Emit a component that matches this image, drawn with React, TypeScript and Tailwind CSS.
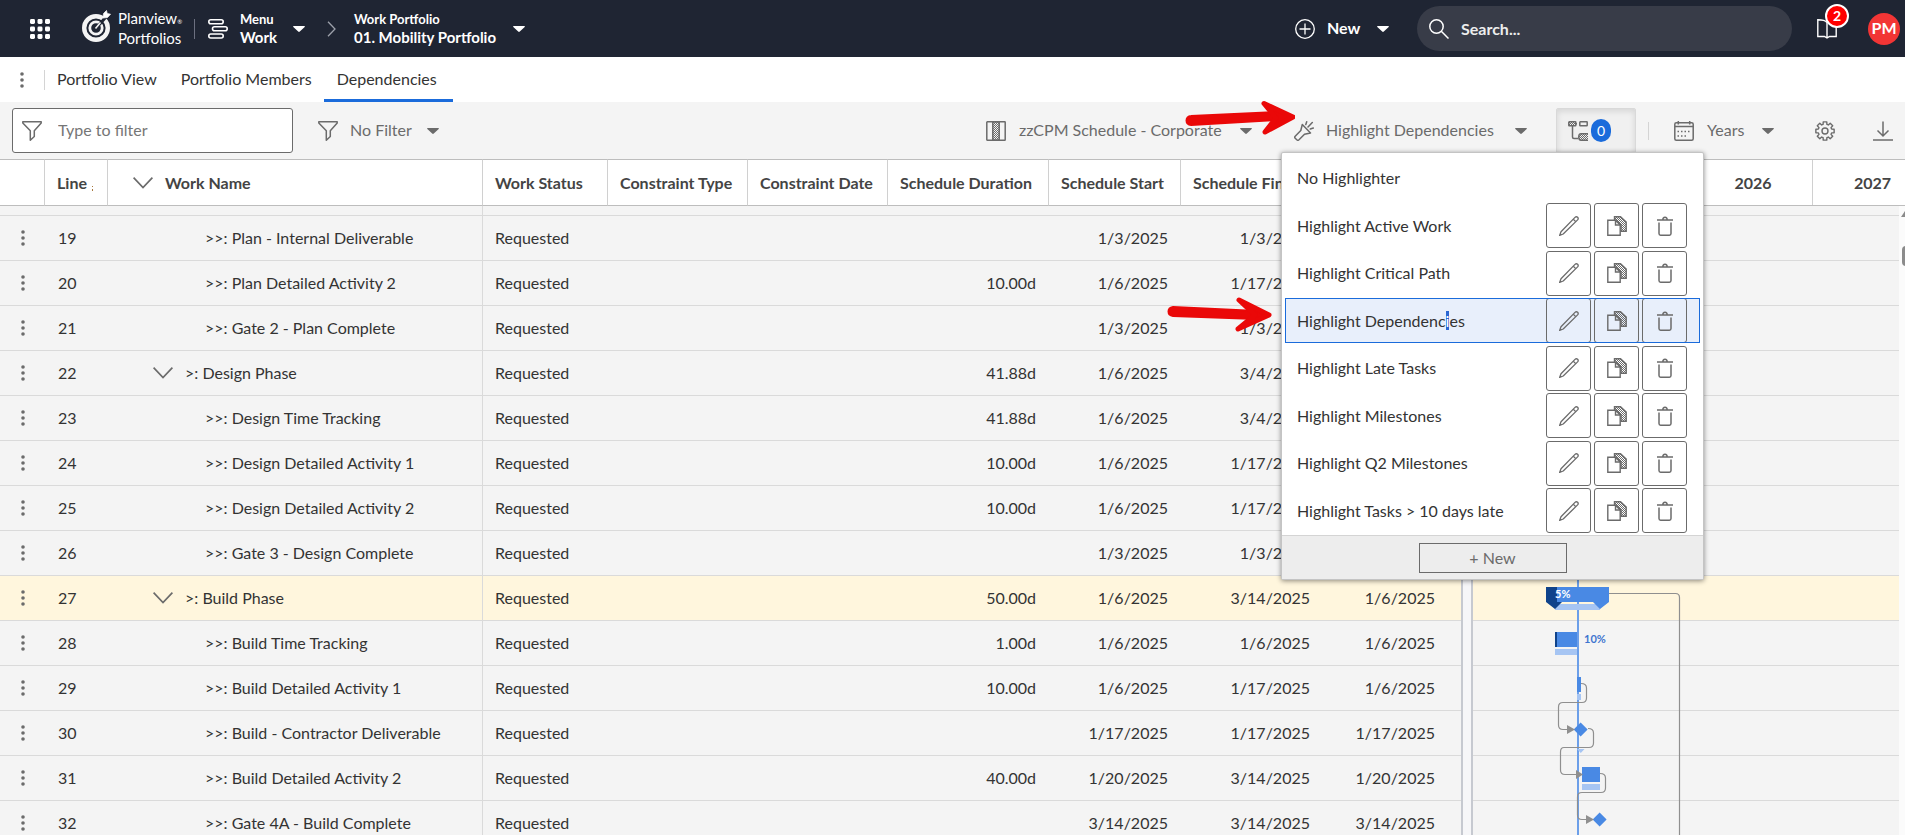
import { useState } from 'react';

interface WorkRow {
  line: number;
  name: string;
  phase?: boolean;
  duration?: string;
  start: string;
  finish: string;
  actual?: string;
  selected?: boolean;
}

const rows: WorkRow[] = [
  { line: 19, name: '>>: Plan - Internal Deliverable', start: '1/3/2025', finish: '1/3/2025' },
  { line: 20, name: '>>: Plan Detailed Activity 2', duration: '10.00d', start: '1/6/2025', finish: '1/17/2025' },
  { line: 21, name: '>>: Gate 2 - Plan Complete', start: '1/3/2025', finish: '1/3/2025' },
  { line: 22, name: '>: Design Phase', phase: true, duration: '41.88d', start: '1/6/2025', finish: '3/4/2025' },
  { line: 23, name: '>>: Design Time Tracking', duration: '41.88d', start: '1/6/2025', finish: '3/4/2025' },
  { line: 24, name: '>>: Design Detailed Activity 1', duration: '10.00d', start: '1/6/2025', finish: '1/17/2025' },
  { line: 25, name: '>>: Design Detailed Activity 2', duration: '10.00d', start: '1/6/2025', finish: '1/17/2025' },
  { line: 26, name: '>>: Gate 3 - Design Complete', start: '1/3/2025', finish: '1/3/2025' },
  { line: 27, name: '>: Build Phase', phase: true, duration: '50.00d', start: '1/6/2025', finish: '3/14/2025', actual: '1/6/2025', selected: true },
  { line: 28, name: '>>: Build Time Tracking', duration: '1.00d', start: '1/6/2025', finish: '1/6/2025', actual: '1/6/2025' },
  { line: 29, name: '>>: Build Detailed Activity 1', duration: '10.00d', start: '1/6/2025', finish: '1/17/2025', actual: '1/6/2025' },
  { line: 30, name: '>>: Build - Contractor Deliverable', start: '1/17/2025', finish: '1/17/2025', actual: '1/17/2025' },
  { line: 31, name: '>>: Build Detailed Activity 2', duration: '40.00d', start: '1/20/2025', finish: '3/14/2025', actual: '1/20/2025' },
  { line: 32, name: '>>: Gate 4A - Build Complete', start: '3/14/2025', finish: '3/14/2025', actual: '3/14/2025' },
];

const highlighters = [
  'Highlight Active Work',
  'Highlight Critical Path',
  'Highlight Dependencies',
  'Highlight Late Tasks',
  'Highlight Milestones',
  'Highlight Q2 Milestones',
  'Highlight Tasks > 10 days late',
];

// eight teeth around a 20x20 box
const gearPath = Array.from({ length: 8 }, (_, i) => i * 45)
  .flatMap((a) => [[a - 16, 6.9], [a - 11, 9.3], [a + 11, 9.3], [a + 16, 6.9]])
  .map(([deg, r], i) => {
    const rad = (deg * Math.PI) / 180;
    return `${i ? 'L' : 'M'}${(10 + r * Math.sin(rad)).toFixed(2)} ${(10 - r * Math.cos(rad)).toFixed(2)}`;
  })
  .join('') + 'Z';

function Caret({ className = '' }: { className?: string }) {
  return (
    <svg className={`w-3 h-[6px] shrink-0 ${className}`} viewBox="0 0 12 6" fill="currentColor">
      <path d="M0.8 0h10.4c.7 0 1 .6.5 1.100L6.800 5.600c-.5.5-1.100.5-1.600 0L.3 1.100C-.2.6.1 0 .8 0z" />
    </svg>
  );
}

function Dots() {
  return (
    <svg className="w-1 h-4 block" viewBox="0 0 4 16" fill="#6b6b6b">
      <circle cx="2" cy="2" r="1.8" />
      <circle cx="2" cy="8" r="1.8" />
      <circle cx="2" cy="14" r="1.8" />
    </svg>
  );
}

function ChevronDown() {
  return (
    <svg className="w-5 h-3 shrink-0" viewBox="0 0 20 12" fill="none" stroke="#6b6b6b" strokeWidth="1.7">
      <path d="M0.6 0.6L10 10.5L19.4 0.6" />
    </svg>
  );
}

function FunnelIcon() {
  return (
    <svg className="w-5 h-5 shrink-0" viewBox="0 0 20 20" fill="none" stroke="#6b6b6b" strokeWidth="1.5" strokeLinejoin="round">
      <path d="M0.8 0.8H19.2V2L12.3 9.8V15.5L8.3 19.2V9.8L0.8 2Z" />
    </svg>
  );
}

function PencilIcon() {
  return (
    <svg className="w-5 h-5" viewBox="0 0 20 20" fill="none" stroke="#6b6b6b" strokeWidth="1.3" strokeLinejoin="round">
      <path d="M0.6 19.4L2 15.8L16 1.4C16.7.7 17.9.6 18.6 1.3C19.300 2 19.300 3.100 18.600 3.900L4.200 18Z" />
      <path d="M14.300 3.200L16.700 5.600" />
    </svg>
  );
}

function CopyIcon() {
  return (
    <svg className="w-5 h-5" viewBox="0 0 20 20" stroke="#6b6b6b" strokeWidth="1.4">
      <path d="M7.500 4V.8H13.500L19.200 6V15.200H14V9L8 4Z" fill="url(#dither)" />
      <path d="M.8 4.300H8.500L13.200 9V19.300H.8Z" fill="none" />
      <path d="M8.500 4.300V9H13.200" fill="none" />
    </svg>
  );
}

function TrashIcon() {
  return (
    <svg className="w-5 h-5" viewBox="0 0 20 20" fill="none" stroke="#6b6b6b" strokeWidth="1.5">
      <path d="M2 4H18M7.8 4C7.8 .2 12.2 .2 12.2 4M4 6.5V17.5C4 18.6 4.6 19.2 5.6 19.2H14.4C15.4 19.2 16 18.6 16 17.5V6.5" />
    </svg>
  );
}

function ArrowMark({ className, d, shaft }: { className: string; d: string; shaft: string }) {
  return (
    <svg className={`absolute z-30 pointer-events-none w-[110px] h-9 ${className}`} viewBox="0 0 110 36" fill="#ea0808" stroke="#ea0808" strokeLinejoin="round" strokeLinecap="round">
      <path d={shaft} strokeWidth="2" />
      <path d={d} strokeWidth="5" />
    </svg>
  );
}

function TopBar() {
  return (
    <header className="h-[57px] shrink-0 bg-[#1f2533] text-white flex items-center pl-[30px] pr-[5px]">
      <button aria-label="Applications">
        <svg className="w-5 h-5" viewBox="0 0 20 20" fill="#fff">
          {[0, 7.5, 15].map((y) => [0, 7.5, 15].map((x) => <rect key={`${x}-${y}`} x={x} y={y} width="5" height="5" rx="1.4" />))}
        </svg>
      </button>
      <a href="#" className="flex items-center ml-8 w-[112px]">
        <svg className="w-[30px] h-[38px] shrink-0" viewBox="0 0 30 38" fill="none" stroke="#f4f4f4">
          <circle cx="14" cy="18" r="11.8" strokeWidth="4.4" />
          <circle cx="14" cy="18" r="6.2" strokeWidth="2.8" />
          <path d="M16 16L24 7" stroke="#1f2533" strokeWidth="3" />
          <path d="M13.500 18.500L18.500 12.500" strokeWidth="1.6" />
          <path d="M21 8L21.500 3.500L24.500 .5L25.200 3.500L28.500 4.200L25.500 7.500Z" fill="#fff" strokeWidth=".8" />
        </svg>
        <span className="ml-[6px] pb-[2px] text-[15px] leading-4 whitespace-nowrap">
          Planview<span className="text-[6px]">®</span>
          <br />
          Portfolios
        </span>
      </a>
      <span className="w-px h-5 bg-[#6c7080]" />
      <button className="flex items-center ml-[13px] text-left font-bold">
        <svg className="w-5 h-5" viewBox="0 0 20 20" fill="none" stroke="#fff" strokeWidth="1.600">
          <rect x=".8" y=".8" width="14.4" height="4" rx="2" />
          <rect x="4.500" y="7.800" width="14.700" height="4" rx="2" />
          <rect x=".8" y="15" width="14.4" height="4" rx="2" />
        </svg>
        <span className="ml-3 w-[53px] pb-[2px]">
          <span className="block text-[13px] leading-[18px]">Menu</span>
          <span className="block text-[15px] leading-[18px]">Work</span>
        </span>
        <Caret />
      </button>
      <svg className="w-[9px] h-4 ml-[22px]" viewBox="0 0 9 16" fill="none" stroke="#9da1ab" strokeWidth="1.3">
        <path d="M1 .7L8 8L1 15.3" />
      </svg>
      <button className="flex items-center ml-[18px] text-left font-bold">
        <span className="w-[159px] pb-[2px]">
          <span className="block text-[13px] leading-[18px]">Work Portfolio</span>
          <span className="block text-[15px] leading-[18px]">01. Mobility Portfolio</span>
        </span>
        <Caret />
      </button>

      <button className="flex items-center ml-auto font-bold">
        <svg className="w-5 h-5" viewBox="0 0 20 20" fill="none" stroke="#fff" strokeWidth="1.3">
          <circle cx="10" cy="10" r="9.3" />
          <path d="M10 4.500V15.500M4.500 10H15.500" />
        </svg>
        <span className="ml-3 w-[50px] text-left pb-px">New</span>
        <Caret />
      </button>
      <label className="flex items-center ml-7 w-[375px] h-[45px] rounded-full bg-[#383c48] pl-3">
        <svg className="w-5 h-5 shrink-0" viewBox="0 0 20 20" fill="none" stroke="#fff" strokeWidth="1.5">
          <circle cx="7.500" cy="7.500" r="6.700" />
          <path d="M12.300 12.300L19.500 19.500" />
        </svg>
        <input aria-label="Search" placeholder="Search..." className="ml-3 w-72 bg-transparent outline-none font-bold placeholder:text-[#eceded]" />
      </label>
      <button aria-label="Notifications" className="relative ml-[25px] w-5 h-5">
        <svg className="w-5 h-5" viewBox="0 0 20 20" fill="none" stroke="#fff" strokeWidth="1.4">
          <path d="M10 3.500V19M10 3.500C8 1 4 .8.8.8V17.500H7.500L10 19L12.500 17.500H19.200V.8C16 .8 12 1 10 3.500Z" />
        </svg>
        <span className="absolute left-2 -top-[15px] w-6 h-6 rounded-full bg-[#f00] border-2 border-white text-sm leading-5 font-bold text-center">2</span>
      </button>
      <button className="ml-[31px] w-8 h-8 rounded-full bg-[#f23535] font-bold text-base text-center pb-px">PM</button>
    </header>
  );
}

function Tabs() {
  return (
    <nav className="h-[45px] shrink-0 flex items-stretch bg-white text-[#333]">
      <button aria-label="Tab options" className="w-11 flex items-center justify-center">
        <Dots />
      </button>
      <span className="w-px h-5 bg-[#d4d4d4] self-center" />
      <a href="#" className="flex items-center px-3 pb-[2px]">Portfolio View</a>
      <a href="#" className="flex items-center px-3 pb-[2px]">Portfolio Members</a>
      <a href="#" className="flex items-center pl-[13px] pr-4 pt-px border-b-[3px] border-[#1a6bdb]">Dependencies</a>
    </nav>
  );
}

function HighlightMenu() {
  const [selected, setSelected] = useState('Highlight Dependencies');

  return (
    <div className="absolute z-20 left-[-13px] top-[32px] w-[423px] bg-white border border-[#c4c4c4] rounded-[2px] shadow-[0_1px_5px_rgba(0,0,0,0.45)] text-[#333]">
      <ul className="h-[382px] pt-[2px] flex flex-col">
        <li className="flex-1 flex items-center pl-[15px]">
          <button onClick={() => setSelected('')}>No Highlighter</button>
        </li>
        {highlighters.map((name) => (
          <li key={name} className="flex-1 flex items-center px-[3px]">
            <div className={`flex-1 flex items-center h-[45px] ${name === selected ? 'bg-[#e8effb] outline outline-1 -outline-offset-1 outline-[#1a6bdb]' : ''}`}>
              <button className="flex-1 text-left pl-3" onClick={() => setSelected(name)}>
                {name === selected && name.endsWith('ies') ? (
                  <>
                    {name.slice(0, -3)}
                    <span className="bg-[#2a66d2] text-white">i</span>es
                  </>
                ) : (
                  name
                )}
              </button>
              <div className="flex gap-[3px] mr-[13px]">
                <button aria-label={`Edit ${name}`} className="w-[45px] h-[45px] border border-[#6b6b6b] rounded-[3px] flex items-center justify-center"><PencilIcon /></button>
                <button aria-label={`Copy ${name}`} className="w-[45px] h-[45px] border border-[#6b6b6b] rounded-[3px] flex items-center justify-center"><CopyIcon /></button>
                <button aria-label={`Delete ${name}`} className="w-[45px] h-[45px] border border-[#6b6b6b] rounded-[3px] flex items-center justify-center"><TrashIcon /></button>
              </div>
            </div>
          </li>
        ))}
      </ul>
      <div className="h-11 pt-px bg-[#ededed] border-t border-[#d4d4d4] flex items-center justify-center">
        <button className="w-[148px] h-[30px] border border-[#6b6b6b] text-[#6b6b6b]">+ New</button>
      </div>
    </div>
  );
}

function Toolbar() {
  return (
    <div className="h-[57px] shrink-0 flex items-center bg-[#f4f4f4] pl-3 pr-3 text-[#6b6b6b]">
      <label className="flex items-center w-[281px] h-[45px] bg-white border border-[#6b6b6b] rounded-[3px] pl-[9px]">
        <FunnelIcon />
        <input aria-label="Type to filter" placeholder="Type to filter" className="ml-4 pb-[2px] w-52 outline-none placeholder:text-[#767676]" />
      </label>
      <button className="flex items-center ml-[25px]">
        <FunnelIcon />
        <span className="ml-3 w-[77px] pb-[2px] text-left">No Filter</span>
        <Caret />
      </button>

      <button className="flex items-center ml-auto">
        <svg className="w-5 h-5" viewBox="0 0 20 20" stroke="#6b6b6b" strokeWidth="1.5">
          <rect x="6.800" y=".8" width="6.400" height="18.400" fill="url(#dither)" />
          <rect x=".8" y=".8" width="18.400" height="18.400" rx=".5" fill="none" />
        </svg>
        <span className="ml-[13px] w-[221px] pb-[2px] text-left">zzCPM Schedule - Corporate</span>
        <Caret />
      </button>
      <div className="relative ml-[42px]">
        <button className="flex items-center">
          <svg className="w-5 h-5" viewBox="0 0 20 20" fill="none" stroke="#6b6b6b" strokeWidth="1.5" strokeLinejoin="round">
            <path d="M1.200 15.300L6.800 9.500L8.300 3.500L16.500 12L10.500 13.300L5 18.800C4.300 19.400 3.500 19.400 2.800 18.800L1.200 17.200C.6 16.600.6 15.900 1.200 15.300Z" />
            <path d="M11.800 3.500L12.700 .8M14 6L18.300 1.500M16.300 8L19.300 7" strokeLinecap="round" />
          </svg>
          <span className="ml-3 w-[189px] pb-[2px] text-left">Highlight Dependencies</span>
          <Caret />
        </button>
        <ArrowMark className="left-[-109px] -top-5" shaft="M6 16L92 12V20L6 25C0 25 0 16 6 16Z" d="M79 3.500L108 17L80 32L91 18Z" />
        <ArrowMark className="left-[-129px] top-[177px]" shaft="M8 10L92 14V22L8 19C2 18 2 11 8 10Z" d="M74 3L104 18L73 32L90 18Z" />
        <HighlightMenu />
      </div>
      <button aria-label="Dependency view" className="flex items-center ml-[29px] w-20 h-[45px] pl-[11px] border border-[#d9d9d9] bg-[#f0f0f0] rounded-[2px] shadow-[inset_0_2px_6px_rgba(0,0,0,0.12)]">
        <svg className="w-5 h-5" viewBox="0 0 20 20" fill="none" stroke="#6b6b6b" strokeWidth="1.5">
          <rect x=".8" y=".8" width="7" height="4" rx=".5" fill="url(#dither)" />
          <rect x="11.800" y=".8" width="7.400" height="4" rx=".5" />
          <path d="M4.500 5V16C4.500 17.500 5.300 17.500 6 17.500H10M7.500 2.800H9" />
          <path d="M20 12.800H13C10 12.800 10 19.200 13 19.200H20" fill="url(#dither)" />
        </svg>
        <span className="ml-[3px] w-5 h-[23px] rounded-full bg-[#1a6bdb] text-white text-sm leading-[23px] text-center">0</span>
      </button>
      <span className="w-px h-[18px] bg-[#d4d4d4] ml-3" />
      <button className="flex items-center ml-[25px]">
        <svg className="w-5 h-5" viewBox="0 0 20 20" fill="none" stroke="#6b6b6b" strokeWidth="1.5">
          <rect x=".8" y="1.800" width="18.400" height="17.400" rx="1.500" />
          <path d="M.8 5.500H19.200M4.300 0V3.500M15.700 0V3.500" />
          <path d="M3.500 10.500H17M3.500 15H13" strokeDasharray="1.500 2" />
        </svg>
        <span className="ml-[13px] w-[55px] pb-[2px] text-left">Years</span>
        <Caret />
      </button>
      <button aria-label="Settings" className="ml-[41px]">
        <svg className="w-5 h-5 block" viewBox="0 0 20 20" fill="none" stroke="#6b6b6b" strokeWidth="1.4" strokeLinejoin="round">
          <path d={gearPath} />
          <circle cx="10" cy="10" r="3" />
        </svg>
      </button>
      <button aria-label="Download" className="ml-[38px]">
        <svg className="w-5 h-5 block" viewBox="0 0 20 20" fill="none" stroke="#6b6b6b" strokeWidth="1.5">
          <path d="M10 0.500V15M4.500 9.500L10 15L15.500 9.500M0 19H20" />
        </svg>
      </button>
    </div>
  );
}

function WorkTable() {
  const th = 'border-r border-[#d0d0d0] px-3 font-bold whitespace-nowrap overflow-hidden';
  return (
    <table className="w-[1461px] shrink-0 table-fixed border-separate border-spacing-0 text-[#333]">
      <colgroup>
        <col className="w-[45px]" />
        <col className="w-[63px]" />
        <col className="w-[375px]" />
        <col className="w-[125px]" />
        <col className="w-[140px]" />
        <col className="w-[140px]" />
        <col className="w-[161px]" />
        <col className="w-[132px]" />
        <col className="w-[142px]" />
        <col className="w-[125px]" />
        <col />
      </colgroup>
      <thead>
        <tr className="h-[47px] bg-white text-left text-[#444] *:border-y *:border-y-[#bdbdbd]">
          <th className={th} aria-label="Actions" />
          <th className={th}>
            <span className="flex items-end">
              Line
              <svg className="w-[3px] h-[6px] ml-1 mb-px" viewBox="0 0 3 6" fill="#a8793f">
                <path d="M1 0h1v1H1zM1 3h1v2H1z" />
              </svg>
            </span>
          </th>
          <th className={th}>
            <span className="flex items-center pl-[13px] gap-3">
              <ChevronDown />
              Work Name
            </span>
          </th>
          <th className={th}>Work Status</th>
          <th className={th}>Constraint Type</th>
          <th className={th}>Constraint Date</th>
          <th className={th}>Schedule Duration</th>
          <th className={th}>Schedule Start</th>
          <th className={th}>Schedule Finish</th>
          <th className={th}>Actual Start</th>
          <th aria-label="More" />
        </tr>
      </thead>
      <tbody>
        <tr className="h-[10px] *:border-b *:border-[#dadada]">
          <td colSpan={3} className="border-r" />
          <td colSpan={8} />
        </tr>
        {rows.map((row) => (
          <tr key={row.line} className={`h-[45px] *:border-b *:border-[#dadada] ${row.selected ? 'bg-[#fff6dd]' : ''}`}>
            <td>
              <button aria-label={`Line ${row.line} options`} className="block ml-[21px]">
                <Dots />
              </button>
            </td>
            <td className="pl-[13px]">{row.line}</td>
            <td className="border-r">
              {row.phase ? (
                <span className="flex items-center pl-[45px] gap-3">
                  <ChevronDown />
                  {row.name}
                </span>
              ) : (
                <span className="pl-[97px]">{row.name}</span>
              )}
            </td>
            <td className="pl-3">Requested</td>
            <td />
            <td />
            <td className="pr-[13px] text-right">{row.duration}</td>
            <td className="pr-[13px] text-right">{row.start}</td>
            <td className="pr-[13px] text-right">{row.finish}</td>
            <td className="pr-[13px] text-right">{row.actual}</td>
            <td />
          </tr>
        ))}
      </tbody>
    </table>
  );
}

function Gantt() {
  return (
    <section className="flex-1 min-w-0 overflow-hidden flex flex-col">
      <div className="h-[47px] shrink-0 flex bg-white border-y border-[#bdbdbd] font-bold text-[#444]">
        <div className="w-[103px] shrink-0 border-r border-[#d0d0d0]" />
        <div className="w-[118px] shrink-0 border-r border-[#d0d0d0]" />
        <div className="w-[119px] shrink-0 border-r border-[#d0d0d0] flex items-center justify-center">2026</div>
        <div className="w-[119px] shrink-0 flex items-center justify-center">2027</div>
      </div>
      <div className="relative mr-[6px]">
        <div className="h-[10px] border-b border-[#dadada]" />
        {rows.map((row) => (
          <div key={row.line} className={`h-[45px] border-b border-[#dadada] ${row.selected ? 'bg-[#fff6dd]' : ''}`} />
        ))}
        <svg className="absolute left-0 top-0 w-[426px] h-[640px]" viewBox="0 0 426 640">
          <path d="M105 0V640" stroke="#6c9fe9" strokeWidth="2" />
          <g fill="#a6c5f3">
            <path d="M82 398h45v6H82zM82 443h22v6H82zM104 488h4v6h-4zM109 578h18v6h-18zM104 543h7.500l-3.700 4z" />
          </g>
          <g fill="#4989e4">
            <path d="M84 381H136V396L127 403L120 396H84Z" />
            <path d="M84 426h20v15H84zM104 471h4v15h-4zM109 561h18v15h-18z" />
            <path d="M107.600 516.500l7 7-7 7-7-7zM126.600 606.500l7 7-7 7-7-7z" />
          </g>
          <path d="M73 381H84V396H89L82 403L73 396ZM82 426h2v15h-2z" fill="#10438a" />
          <g fill="none" stroke="#8f8f8f" strokeWidth="1.2">
            <path d="M136 387.500H202.500Q206.500 387.500 206.500 391.500V640" />
            <path d="M108 477.500Q113.500 477.500 113.500 482V492Q113.500 496.500 109 496.500H90Q85.500 496.500 85.500 501V519Q85.500 523.500 90 523.500H95" />
            <path d="M115 522.500Q120.500 522.500 120.500 527V537Q120.500 541.500 116 541.500H91Q87.500 541.500 87.500 546V564Q87.500 568.500 92 568.500H104" />
            <path d="M127 567.500Q132.500 567.500 132.500 572V582Q132.500 586.500 128 586.500H109Q104.500 586.500 104.500 591V609Q104.500 613.500 109 613.500H114" />
          </g>
          <path d="M94 519l8 4.500-8 4.500zM103 564l7 4.500-7 4.500zM113 609l8 4.500-8 4.500z" fill="#8f8f8f" />
          <text x="82" y="392" fill="#fff" fontSize="11" fontWeight="700">5%</text>
          <text x="111" y="437" fill="#3f74cf" fontSize="11" fontWeight="700">10%</text>
        </svg>
      </div>
    </section>
  );
}

export default function App() {
  return (
    <div className="h-screen flex flex-col overflow-hidden bg-[#f4f4f4] text-base leading-5 font-['Lato','Open_Sans',sans-serif]">
      <svg className="absolute w-0 h-0" aria-hidden="true">
        <defs>
          <pattern id="dither" width="2" height="2" patternUnits="userSpaceOnUse">
            <path d="M0 0h1v1H0zM1 1h1v1H1z" fill="#6b6b6b" stroke="none" />
          </pattern>
        </defs>
      </svg>
      <TopBar />
      <Tabs />
      <Toolbar />
      <main className="relative flex-1 min-h-0 flex items-start overflow-hidden">
        <WorkTable />
        <div className="w-3 shrink-0 self-stretch bg-[#f6f6f8] border-x-2 border-[#c6c9d0]" />
        <Gantt />
        <div className="absolute right-0 top-[47px] bottom-0 w-[6px] bg-[#fbfbfb]">
          <div className="absolute top-10 left-[3px] w-2 h-5 rounded bg-[#8b8b8b]" />
          <svg className="absolute left-[2px] top-1 w-2 h-2" viewBox="0 0 8 8" fill="#8b8b8b">
            <path d="M0 7L4 1L8 7Z" />
          </svg>
        </div>
      </main>
    </div>
  );
}
